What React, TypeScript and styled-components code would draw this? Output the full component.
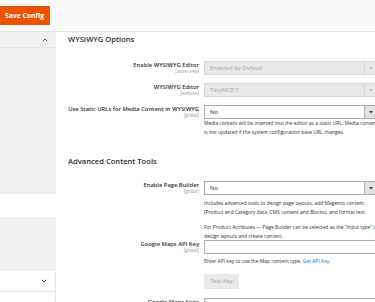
import React from "react";
import styled, { createGlobalStyle } from "styled-components";

const Global = createGlobalStyle`
  html, body { margin: 0; padding: 0; background: #fff; overflow: hidden; }
  body { font-family: "Open Sans", "Liberation Sans", sans-serif; color: #303030; }
  * { box-sizing: border-box; }
`;

const Page = styled.div`
  width: 375px;
  height: 302px;
  overflow: hidden;
  display: flex;
  flex-direction: column;
`;

const Header = styled.div`
  height: 32px;
  flex: none;
  background: #f8f8f8;
  border-bottom: 1px solid #e3e3e3;
  display: flex;
  align-items: flex-start;
  padding-top: 6px;
`;

const SaveButton = styled.button`
  height: 19px;
  width: 50px;
  border: none;
  background: #eb5202;
  color: #fff;
  font-family: "Open Sans", sans-serif;
  font-weight: 700;
  font-size: 6.8px;
  padding: 0 0 0 5px;
  text-align: left;
  white-space: nowrap;
`;

const Body = styled.div`
  flex: 1;
  display: flex;
  min-height: 0;
`;

const Sidebar = styled.div`
  width: 56px;
  flex: none;
  display: flex;
  flex-direction: column;
`;

const NavTitle = styled.div<{ $open?: boolean }>`
  height: ${(p) => (p.$open ? 16 : 21)}px;
  background: ${(p) => (p.$open ? "#f0f0f0" : "#fff")};
  border-bottom: 1px solid #e3e3e3;
  border-right: ${(p) => (p.$open ? "none" : "1px solid #e6e6e6")};
  display: flex;
  align-items: center;
  justify-content: flex-end;
  padding-right: 8px;
`;

const NavItems = styled.div<{ $h: number }>`
  height: ${(p) => p.$h}px;
  background: #f0f0f0;
  flex: none;
`;

const NavGap = styled.div<{ $h: number }>`
  height: ${(p) => p.$h}px;
  flex: none;
`;

const NavRest = styled.div`
  flex: 1;
  border-right: 1px solid #e6e6e6;
`;

const Main = styled.div`
  flex: 1;
  padding-left: 12px;
  display: flex;
  flex-direction: column;
  min-width: 0;
`;

const SectionTitle = styled.div<{ $mt: number }>`
  margin-top: ${(p) => p.$mt}px;
  font-size: 7.6px;
  font-weight: 600;
  line-height: 10px;
  color: #303030;
  white-space: nowrap;
`;

const Row = styled.div<{ $mt: number }>`
  margin-top: ${(p) => p.$mt}px;
  display: grid;
  grid-template-columns: 131px 175px;
  column-gap: 5px;
  align-items: start;
`;

const LabelBox = styled.div`
  text-align: right;
  white-space: nowrap;
`;

const LabelText = styled.div`
  font-size: 5.8px;
  font-weight: 600;
  line-height: 8px;
  color: #303030;
`;

const Scope = styled.div`
  font-size: 4.4px;
  line-height: 5px;
  color: #999;
`;

const Control = styled.div`
  display: flex;
  flex-direction: column;
`;

const SelectBox = styled.div<{ $disabled?: boolean }>`
  height: 14px;
  display: flex;
  border: 1px solid ${(p) => (p.$disabled ? "#d6d6d6" : "#adadad")};
  background: ${(p) => (p.$disabled ? "#e9e9e9" : "#fff")};
  font-size: 6px;
  color: ${(p) => (p.$disabled ? "#a6a6a6" : "#303030")};
`;

const SelectValue = styled.div`
  flex: 1;
  padding-left: 5px;
  line-height: 12px;
  white-space: nowrap;
`;

const Arrow = styled.div<{ $disabled?: boolean }>`
  width: 14px;
  flex: none;
  border-left: 1px solid ${(p) => (p.$disabled ? "#d6d6d6" : "#adadad")};
  background: ${(p) => (p.$disabled ? "#e9e9e9" : "#e3e3e3")};
  display: flex;
  align-items: center;
  justify-content: center;
  padding-right: 2px;
`;

const TextInput = styled.div`
  height: 14px;
  border: 1px solid #adadad;
  background: #fff;
`;

const Note = styled.div<{ $mt?: number }>`
  margin-top: ${(p) => p.$mt ?? 0}px;
  font-size: 4.95px;
  line-height: 8.5px;
  color: #303030;
  white-space: nowrap;
`;

const Link = styled.span`
  color: #007bdb;
`;

const Divider = styled.div`
  margin-top: 12px;
  height: 1px;
  background: #e3e3e3;
`;

const GrayButton = styled.button`
  margin-top: 8px;
  width: 35px;
  height: 15px;
  border: none;
  background: #e9e9e9;
  color: #a0a0a0;
  font-family: "Open Sans", sans-serif;
  font-size: 5.8px;
  padding: 0;
`;

const Chevron = ({ up }: { up?: boolean }) => (
  <svg width="6" height="4" viewBox="0 0 6 4">
    <polyline
      points={up ? "0.8,3.2 3,1 5.2,3.2" : "0.8,0.8 3,3 5.2,0.8"}
      fill="none"
      stroke="#555"
      strokeWidth="1"
    />
  </svg>
);

const DownTri = ({ light }: { light?: boolean }) => (
  <svg width="4" height="3" viewBox="0 0 4 3">
    <polygon points="0,0 4,0 2,2.6" fill={light ? "#b5b5b5" : "#41362f"} />
  </svg>
);

const Select = ({ value, disabled }: { value: string; disabled?: boolean }) => (
  <SelectBox $disabled={disabled}>
    <SelectValue>{value}</SelectValue>
    <Arrow $disabled={disabled}>
      <DownTri light={disabled} />
    </Arrow>
  </SelectBox>
);

const Label = ({ text, scope }: { text: string; scope: string }) => (
  <LabelBox>
    <LabelText>{text}</LabelText>
    <Scope>[{scope}]</Scope>
  </LabelBox>
);

export default function App() {
  return (
    <Page>
      <Global />
      <Header>
        <SaveButton>Save Config</SaveButton>
      </Header>
      <Body>
        <Sidebar>
          <NavTitle $open>
            <Chevron up />
          </NavTitle>
          <NavItems $h={146} />
          <NavGap $h={23} />
          <NavItems $h={54} />
          <NavTitle>
            <Chevron />
          </NavTitle>
          <NavRest />
        </Sidebar>
        <Main>
          <SectionTitle $mt={2}>WYSIWYG Options</SectionTitle>
          <Row $mt={17}>
            <Label text="Enable WYSIWYG Editor" scope="store view" />
            <Select value="Enabled by Default" disabled />
          </Row>
          <Row $mt={8}>
            <Label text="WYSIWYG Editor" scope="website" />
            <Select value="TinyMCE 5" disabled />
          </Row>
          <Row $mt={8}>
            <Label text="Use Static URLs for Media Content in WYSIWYG" scope="global" />
            <Control>
              <Select value="No" />
              <Note>
                Media content will be inserted into the editor as a static URL. Media content
                <br />
                is not updated if the system configuration base URL changes.
              </Note>
            </Control>
          </Row>
          <Divider />
          <SectionTitle $mt={8}>Advanced Content Tools</SectionTitle>
          <Row $mt={15}>
            <Label text="Enable Page Builder" scope="global" />
            <Control>
              <Select value="No" />
              <Note $mt={4}>
                Includes advanced tools to design page layouts, add Magento content
                <br />
                (Product and Category data, CMS content and Blocks), and format text.
              </Note>
              <Note $mt={7}>
                For Product Attributes — Page Builder can be selected as the "input type" to
                <br />
                design layouts and create content.
              </Note>
            </Control>
          </Row>
          <Row $mt={0}>
            <Label text="Google Maps API Key" scope="global" />
            <Control>
              <TextInput />
              <Note $mt={3}>
                Enter API key to use the Map content type. <Link>Get API Key.</Link>
              </Note>
              <GrayButton>Test Key</GrayButton>
            </Control>
          </Row>
          <Row $mt={9}>
            <Label text="Google Maps Style" scope="global" />
            <Control>
              <TextInput />
            </Control>
          </Row>
        </Main>
      </Body>
    </Page>
  );
}
